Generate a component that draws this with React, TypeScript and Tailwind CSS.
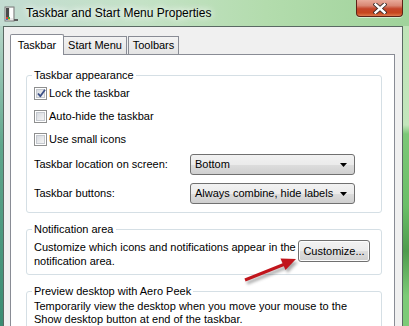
import React from 'react'

const font = 'font-["Segoe_UI","Liberation_Sans",Arial,sans-serif]'

function Checkbox({ checked }: { checked?: boolean }) {
  return (
    <div className="w-[13px] h-[13px] border border-[#8e8f8f] bg-white p-[1px] shrink-0 relative">
      <div className="w-full h-full border border-[#c4c8ce] bg-[linear-gradient(135deg,#d8dbe0,#f4f4f4)]" />
      {checked && (
        <svg className="absolute left-[1px] top-[0px]" width="11" height="11" viewBox="0 0 11 11">
          <path d="M2 5.5 L4.3 8.2 L9 1.8" fill="none" stroke="#3b4f86" strokeWidth="1.8" strokeLinejoin="round" />
        </svg>
      )}
    </div>
  )
}

function Dropdown({ value }: { value: string }) {
  return (
    <div className="w-[165px] h-[21px] border border-[#707070] rounded-[3px] flex items-center pl-[4px] pr-[7px] bg-[linear-gradient(#f2f2f2_0%,#ebebeb_50%,#dddddd_51%,#cfcfcf_100%)]">
      <span className="flex-1 whitespace-nowrap">{value}</span>
      <svg width="7" height="4" viewBox="0 0 7 4">
        <path d="M0 0 H7 L3.5 4 Z" fill="#000" />
      </svg>
    </div>
  )
}

function Group({ title, children, className = '' }: { title: string; children: React.ReactNode; className?: string }) {
  return (
    <fieldset className={`border border-[#d5dfe5] rounded-[3px] pl-[7px] pr-[11px] ${className}`}>
      <legend className="-ml-[2px] px-[2px] leading-[14px]">{title}</legend>
      {children}
    </fieldset>
  )
}

function WindowIcon() {
  return (
    <svg width="16" height="16" viewBox="0 0 16 16">
      <rect x="2" y="1" width="9" height="14" fill="#e9e9e9" stroke="#7b7b7b" />
      <rect x="3" y="2" width="3" height="12" fill="#4a4a4a" />
      <rect x="7" y="2" width="3" height="10" fill="#fdfdfd" />
      <rect x="3" y="11" width="2" height="2" fill="#e23b2e" />
      <rect x="5" y="11" width="2" height="2" fill="#38a84a" />
      <rect x="3" y="13" width="2" height="1" fill="#2f6fd8" />
      <rect x="5" y="13" width="2" height="1" fill="#f1c232" />
      <rect x="11" y="13" width="4" height="2" fill="#5b5b5b" />
    </svg>
  )
}

export default function App() {
  return (
    <div className={`w-[409px] h-[326px] overflow-hidden relative text-[11px] text-black ${font}`}>
      {/* title bar */}
      <div className="h-[26px] flex items-center bg-[linear-gradient(90deg,#c3dcd2_0%,#c4e2c6_35%,#b3dcad_65%,#a0d39b_100%)]">
        <div className="ml-[3px] mt-[2px]">
          <WindowIcon />
        </div>
        <span className="ml-[7px] text-[12px] [text-shadow:0_0_6px_#fff,0_0_10px_#fff]">
          Taskbar and Start Menu Properties
        </span>
        <div className="flex-1" />
        <div className="self-start mr-[6px] w-[47px] h-[17px] rounded-b-[4px] border border-t-0 border-[#5d2216] flex items-center justify-center bg-[linear-gradient(#e9ab9b_0%,#d98774_35%,#c4452a_55%,#c6461d_80%,#dd7a4c_100%)] shadow-[0_1px_0_#ffffff80]">
          <svg width="14" height="11" viewBox="0 0 14 11">
            <path d="M2.5 1.5 L11.5 9.5 M11.5 1.5 L2.5 9.5" stroke="#3a2b28" strokeWidth="4.2" strokeLinecap="square" />
            <path d="M2.5 1.5 L11.5 9.5 M11.5 1.5 L2.5 9.5" stroke="#ffffff" strokeWidth="2.4" strokeLinecap="square" />
          </svg>
        </div>
      </div>

      <div className="flex h-[300px]">
        <div className="w-[3px] bg-[linear-gradient(#b6d6c9,#5fa68c_40%,#3a8c72)]" />
        <div className="flex-1 bg-[#f0f0f0] border-l border-t border-r border-[#5a6963] pt-[7px] pl-[6px] pr-[7px]">
          {/* tabs */}
          <div className="flex items-end h-[21px] relative z-10">
            <div className="w-[54px] h-[21px] bg-white border border-b-0 border-[#898c95] rounded-t-[2px] flex justify-center pt-[3px] leading-[14px]">
              Taskbar
            </div>
            <div className="w-[63px] h-[18px] mb-[1px] border border-b-0 border-l-0 border-[#898c95] bg-[linear-gradient(#f3f3f3,#e4e4e4)] flex items-center justify-center">
              Start Menu
            </div>
            <div className="w-[51px] h-[18px] mb-[1px] ml-[1px] border border-b-0 border-[#898c95] bg-[linear-gradient(#f3f3f3,#e4e4e4)] flex items-center justify-center">
              Toolbars
            </div>
          </div>

          {/* panel */}
          <div className="-mt-px h-[300px] bg-white border border-[#898c95] pt-[13px] pl-[15px] pr-[12px]">
            <Group title="Taskbar appearance" className="pb-[8px]">
              {['Lock the taskbar', 'Auto-hide the taskbar', 'Use small icons'].map((t, i) => (
                <div key={t} className="h-[23px] flex items-center gap-[2px]">
                  <Checkbox checked={i === 0} />
                  <span>{t}</span>
                </div>
              ))}
              <div className="mt-[3px] flex items-center">
                <span className="w-[156px]">Taskbar location on screen:</span>
                <Dropdown value="Bottom" />
              </div>
              <div className="mt-[8px] flex items-center">
                <span className="w-[156px]">Taskbar buttons:</span>
                <Dropdown value="Always combine, hide labels" />
              </div>
            </Group>

            <Group title="Notification area" className="mt-[9px] pb-[6px]">
              <div className="mt-[4px] flex items-start justify-between">
                <p className="leading-[14px] whitespace-nowrap">
                  Customize which icons and notifications appear in the
                  <br />
                  notification area.
                </p>
                <button className="w-[72px] h-[22px] border border-[#707070] rounded-[3px] bg-[linear-gradient(#f2f2f2_0%,#ebebeb_50%,#dddddd_51%,#cfcfcf_100%)] shadow-[inset_0_0_0_1px_#fcfcfc]">
                  Customize...
                </button>
              </div>
            </Group>

            <Group title="Preview desktop with Aero Peek" className="mt-[9px] pb-[6px]">
              <p className="mt-[2px] leading-[13px] whitespace-nowrap">
                Temporarily view the desktop when you move your mouse to the
                <br />
                Show desktop button at end of the taskbar.
              </p>
            </Group>
          </div>
        </div>
        <div className="w-[6px] bg-[linear-gradient(#bfe4b8_0%,#c3e6bc_33%,#7cc878_36%,#6bbf68_60%,#4f9c4e_75%,#7ccb77_90%)]" />
      </div>

      {/* red annotation arrow */}
      <svg className="absolute left-0 top-0 pointer-events-none" width="409" height="326" viewBox="0 0 409 326">
        <defs>
          <filter id="blur" x="-20%" y="-20%" width="140%" height="140%">
            <feGaussianBlur stdDeviation="1.5" />
          </filter>
        </defs>
        <g transform="translate(2 3)" opacity="0.45" filter="url(#blur)">
          <path d="M245 280 L285 264" stroke="#444" strokeWidth="3" />
          <path d="M296 259 L285.5 270 L280.5 258.5 Z" fill="#444" />
        </g>
        <path d="M245 280 L285 264" stroke="#c1151c" strokeWidth="3" />
        <path d="M296 259 L285.5 270 L280.5 258.5 Z" fill="#c1151c" />
      </svg>
    </div>
  )
}
